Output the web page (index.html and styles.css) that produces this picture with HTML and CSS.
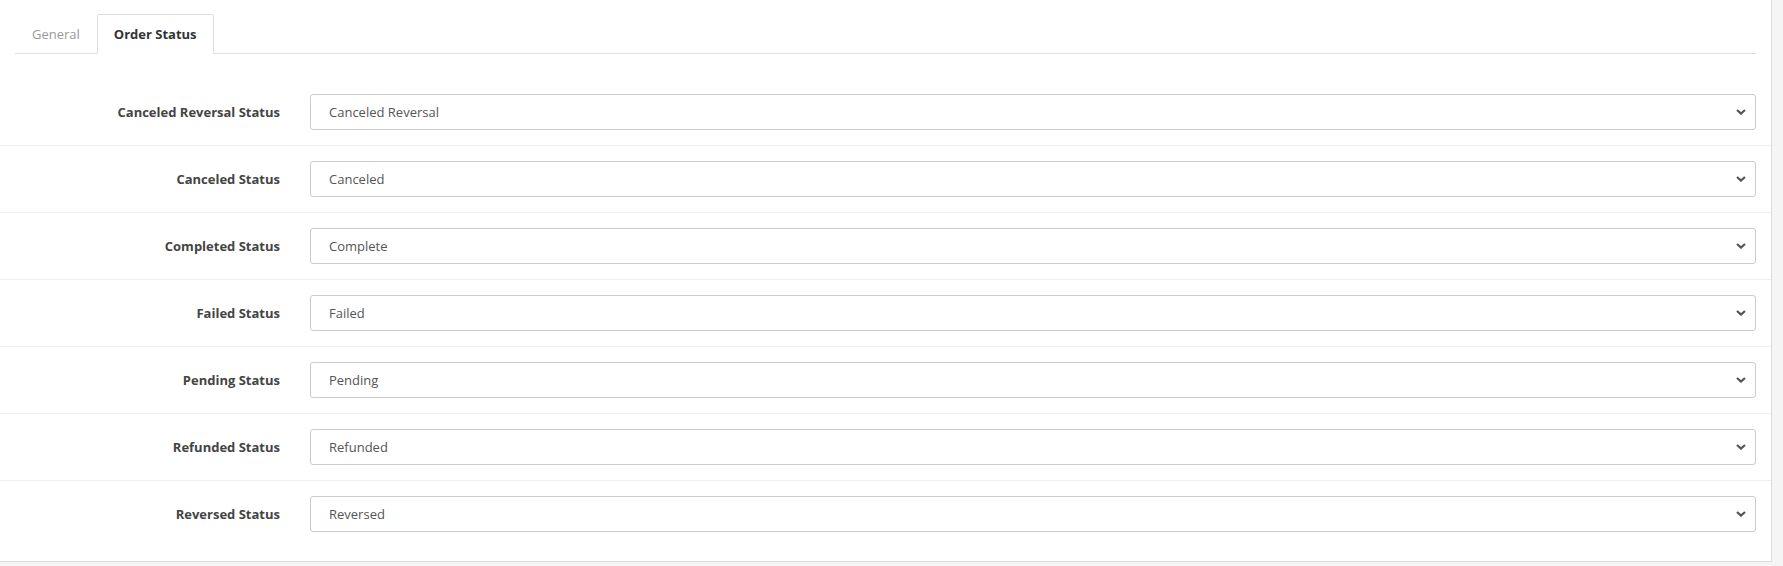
FILE: index.html
```html
<!DOCTYPE html>
<html lang="en">
<head>
  <meta charset="UTF-8">
  <title>Settings | Order Status</title>
  <link rel="stylesheet" href="styles.css">
</head>
<body>
  <div class="panel">
    <!-- tabs -->
    <ul class="nav-tabs">
      <li><a href="#tab-general">General</a></li>
      <li class="active"><a href="#tab-order-status">Order Status</a></li>
    </ul>

    <!-- order status -->
    <div class="tab-content" id="tab-order-status">
      <div class="form-group">
        <label for="canceled-reversal">Canceled Reversal Status</label>
        <select id="canceled-reversal" class="form-control">
          <option>Canceled Reversal</option>
        </select>
      </div>
      <div class="form-group">
        <label for="canceled">Canceled Status</label>
        <select id="canceled" class="form-control">
          <option>Canceled</option>
        </select>
      </div>
      <div class="form-group">
        <label for="completed">Completed Status</label>
        <select id="completed" class="form-control">
          <option>Complete</option>
        </select>
      </div>
      <div class="form-group">
        <label for="failed">Failed Status</label>
        <select id="failed" class="form-control">
          <option>Failed</option>
        </select>
      </div>
      <div class="form-group">
        <label for="pending">Pending Status</label>
        <select id="pending" class="form-control">
          <option>Pending</option>
        </select>
      </div>
      <div class="form-group">
        <label for="refunded">Refunded Status</label>
        <select id="refunded" class="form-control">
          <option>Refunded</option>
        </select>
      </div>
      <div class="form-group">
        <label for="reversed">Reversed Status</label>
        <select id="reversed" class="form-control">
          <option>Reversed</option>
        </select>
      </div>
    </div>
  </div>
</body>
</html>
```

FILE: styles.css
```css
* {
  box-sizing: border-box;
  margin: 0;
  padding: 0;
}
body {
  background: #f5f5f5;
  font-family: 'Open Sans', 'Noto Sans', sans-serif;
  font-size: 13px;
  color: #555;
}
/* panel */
.panel {
  width: 1772px;
  background: #fff;
  border-right: 1px solid #ddd;
  border-bottom: 1px solid #ddd;
  box-shadow: 0 1px 1px rgba(0, 0, 0, 0.04);
  padding: 14px 0 14px;
}
/* tabs */
.nav-tabs {
  display: flex;
  list-style: none;
  margin: 0 15px;
  border-bottom: 1px solid #ddd;
}
.nav-tabs li {
  margin-bottom: -1px;
}
.nav-tabs a {
  display: block;
  height: 40px;
  line-height: 38px;
  padding: 0 16px;
  border: 1px solid transparent;
  border-radius: 2px 2px 0 0;
  color: #999;
  text-decoration: none;
}
.nav-tabs .active a {
  border-color: #ddd #ddd transparent;
  background: #fff;
  color: #333;
  font-weight: 700;
}
.tab-content {
  margin-top: 25px;
}
/* rows */
.form-group {
  display: flex;
  align-items: center;
  gap: 30px;
  padding: 15px 15px;
  border-top: 1px solid #eee;
}
.form-group:first-child {
  border-top: none;
}
.form-group label {
  width: 265px;
  flex: none;
  text-align: right;
  font-weight: 700;
  color: #444;
}
.form-control {
  flex: 1;
  height: 36px;
  padding: 0 30px 0 18px;
  border: 1px solid #ccc;
  border-radius: 3px;
  background: #fff url("data:image/svg+xml,%3Csvg xmlns='http://www.w3.org/2000/svg' width='10' height='6' viewBox='0 0 10 6'%3E%3Cpath d='M1 1l4 3.6L9 1' fill='none' stroke='%23555' stroke-width='2.2'/%3E%3C/svg%3E") no-repeat right 9px center;
  font-family: inherit;
  font-size: 13px;
  color: #555;
  appearance: none;
  -webkit-appearance: none;
  outline: none;
}
```
